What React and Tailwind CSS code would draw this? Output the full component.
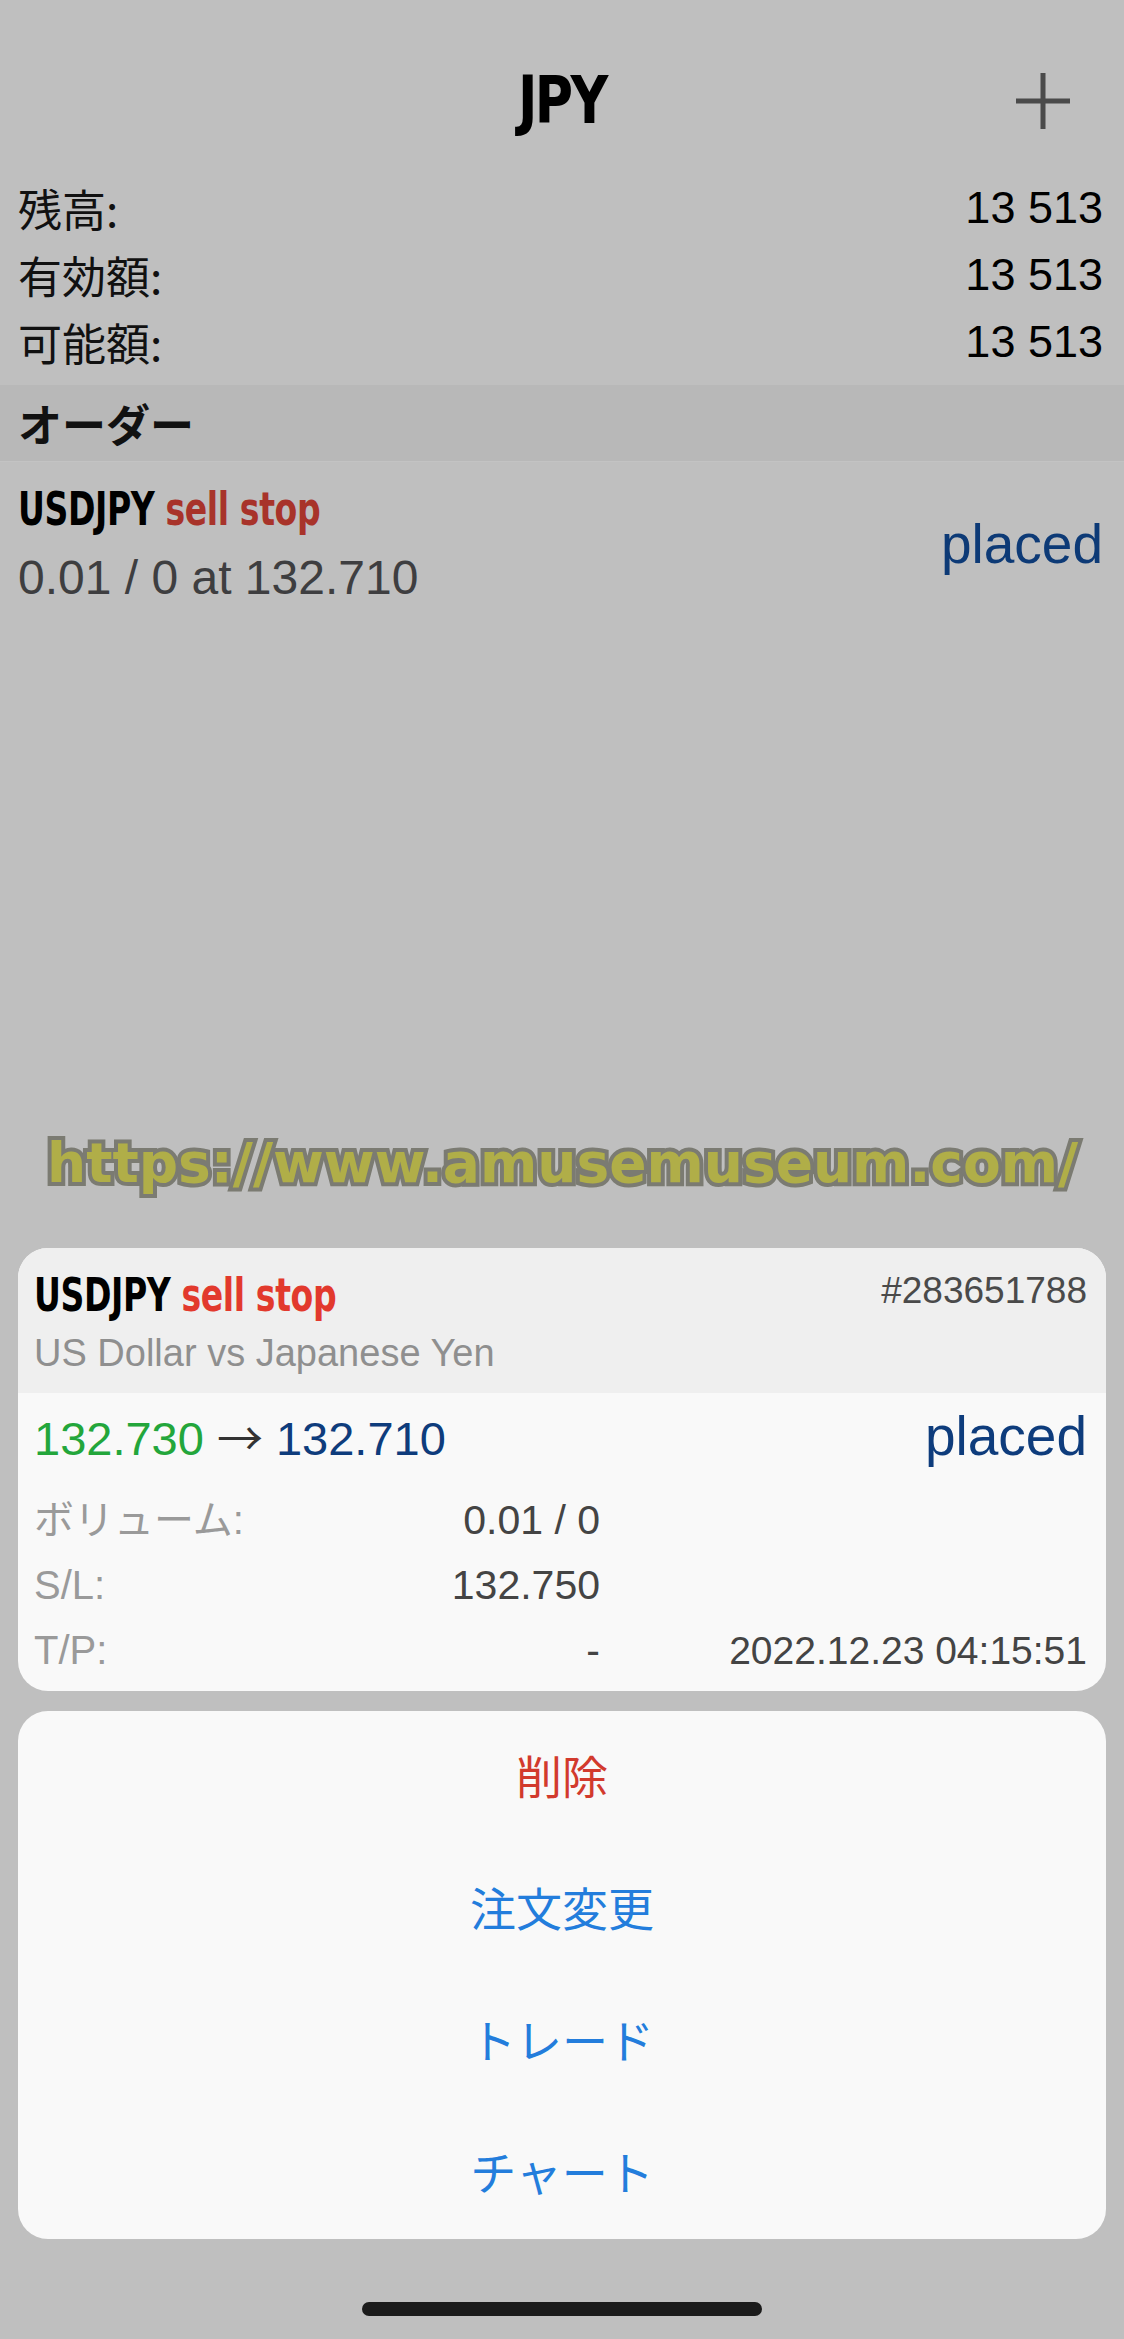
import React from 'react';

const sans = "font-['Liberation_Sans','Noto_Sans_CJK_JP',sans-serif]";
const narrow = "font-['Liberation_Sans_Narrow','DejaVu_Sans_Condensed','Liberation_Sans',sans-serif]";
const jp = "font-['Noto_Sans_CJK_JP',sans-serif]";

const balances = [
  { label: '残高:', value: '13 513' },
  { label: '有効額:', value: '13 513' },
  { label: '可能額:', value: '13 513' },
];

const details = [
  { label: 'ボリューム:', value: '0.01 / 0', extra: '' },
  { label: 'S/L:', value: '132.750', extra: '' },
  { label: 'T/P:', value: '-', extra: '2022.12.23 04:15:51' },
];

const actions = [
  { label: '削除', color: 'text-[#d23a2d]' },
  { label: '注文変更', color: 'text-[#237ddc]' },
  { label: 'トレード', color: 'text-[#237ddc]' },
  { label: 'チャート', color: 'text-[#237ddc]' },
];

const PlusIcon = () => (
  <svg width="54" height="56" viewBox="0 0 54 56" className="block">
    <path d="M27 0 V56 M0 28 H54" stroke="#4a4a4a" strokeWidth="5" fill="none" />
  </svg>
);

const Symbol = ({ red }) => (
  <div className={`${narrow} inline-block origin-left scale-x-[0.8] whitespace-nowrap font-bold text-[46px] leading-none tracking-[-0.5px]`}>
    <span className="text-black">USDJPY</span>{' '}
    <span className={red}>sell stop</span>
  </div>
);

export default function App() {
  return (
    <div className={`w-[1124px] min-h-[2339px] bg-[#bfbfbf] flex flex-col ${sans}`}>
      {/* nav */}
      <div className="h-[146px] pt-[56px] px-[54px] flex items-center justify-between">
        <div className="w-[54px]" />
        <h1 className={`${narrow} scale-x-[0.88] font-bold text-[66px] leading-none tracking-[-3px] text-black`}>JPY</h1>
        <PlusIcon />
      </div>

      {/* balances */}
      <div className="pt-[28px]">
        {balances.map((b) => (
          <div key={b.label} className="h-[67px] pl-[18px] pr-[21px] flex items-center justify-between">
            <span className={`${jp} text-[44px] leading-none text-[#111]`}>{b.label}</span>
            <span className="text-[45px] leading-none text-black">{b.value}</span>
          </div>
        ))}
      </div>

      {/* orders header */}
      <div className="mt-[10px] h-[77px] bg-[#b8b8b8] border-b border-[#c3c3c3] pl-[18px] flex items-center">
        <span className={`${jp} font-bold text-[44px] leading-none text-[#111]`}>オーダー</span>
      </div>

      {/* order row */}
      <div className="pt-[24px] pl-[18px] pr-[21px] flex items-center justify-between">
        <div>
          <Symbol red="text-[#a8332a]" />
          <div className="mt-[22px] text-[48px] leading-none text-[#3e3e40]">0.01 / 0 at 132.710</div>
        </div>
        <span className="text-[55px] leading-none text-[#0d3a76]">placed</span>
      </div>

      {/* watermark */}
      <div className="mt-[534px] pl-[47px]">
        <span className="font-['DejaVu_Sans',sans-serif] font-bold text-[55px] leading-none text-[#b0ae48] [-webkit-text-stroke:8px_#7b7b72] [paint-order:stroke_fill]">
          https://www.amusemuseum.com/
        </span>
      </div>

      {/* order detail card */}
      <div className="mt-[57px] mx-[18px] rounded-[30px] overflow-hidden bg-[#f9f9f9]">
        <div className="bg-[#efefef] pt-[24px] pb-[21px] pl-[16px] pr-[19px]">
          <div className="flex items-start justify-between">
            <Symbol red="text-[#e2392d]" />
            <span className="text-[37px] leading-none text-[#4a4a4a]">#283651788</span>
          </div>
          <div className="mt-[16px] text-[38px] leading-none text-[#8f8f8f]">US Dollar vs Japanese Yen</div>
        </div>
        <div className="pt-[16px] pb-[8px] pl-[16px] pr-[19px]">
          <div className="flex items-baseline justify-between">
            <div className="text-[47px] leading-none whitespace-nowrap">
              <span className="text-[#23a63b]">132.730</span>
              <span className={`${jp} inline-block mx-[13px] text-[46px] leading-none text-[#333]`}>→</span>
              <span className="text-[#0e3c7c]">132.710</span>
            </div>
            <span className="text-[55px] leading-none text-[#0e3c7c]">placed</span>
          </div>
          <div className="mt-[24px]">
            {details.map((d) => (
              <div key={d.label} className="h-[65px] grid grid-cols-[566px_1fr] items-center text-[41px] leading-[65px]">
                <div className="flex justify-between">
                  <span className="text-[#9a9a9a] text-[40px]">{d.label}</span>
                  <span className="text-[#444]">{d.value}</span>
                </div>
                <span className="text-right text-[39px] text-[#444]">{d.extra}</span>
              </div>
            ))}
          </div>
        </div>
      </div>

      {/* actions */}
      <div className="mt-[20px] mx-[18px] rounded-[30px] bg-[#f9f9f9] flex flex-col">
        {actions.map((a) => (
          <div key={a.label} className="h-[132px] pb-[6px] flex items-center justify-center">
            <span className={`${jp} text-[46px] leading-none ${a.color}`}>{a.label}</span>
          </div>
        ))}
      </div>

      {/* home indicator */}
      <div className="mt-[63px] flex justify-center">
        <div className="w-[400px] h-[14px] rounded-full bg-[#1b1b1b]" />
      </div>
    </div>
  );
}
